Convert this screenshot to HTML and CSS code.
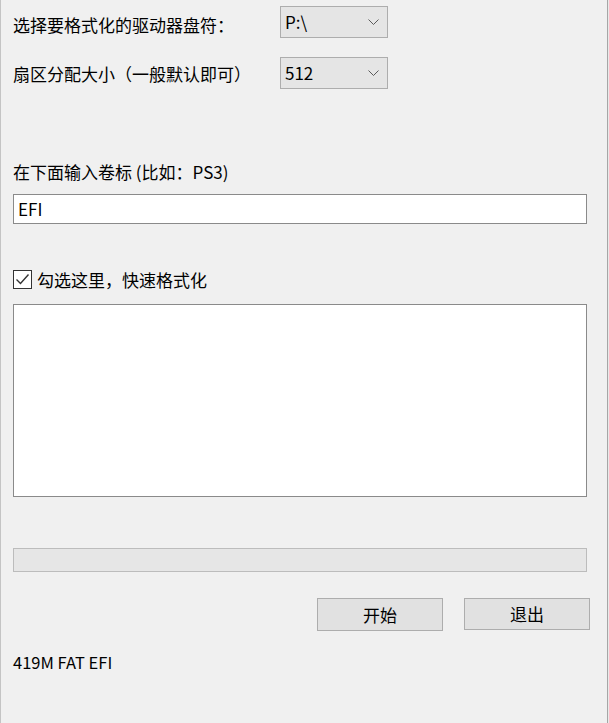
FILE: index.html
```html
<!DOCTYPE html>
<html lang="zh-CN">
<head>
<meta charset="utf-8">
<title>格式化</title>
<link rel="stylesheet" href="styles.css">
</head>
<body>
<div class="window">
  <div class="row row-first">
    <span class="label">选择要格式化的驱动器盘符：</span>
    <div class="combo">
      <span class="combo-text">P:\</span>
      <svg class="chev" width="11" height="6" viewBox="0 0 11 6"><polyline points="0.5,0.5 5.5,5.5 10.5,0.5" fill="none" stroke="#5a5a5a" stroke-width="1"/></svg>
    </div>
  </div>
  <div class="row row-second">
    <span class="label">扇区分配大小（一般默认即可）</span>
    <div class="combo">
      <span class="combo-text">512</span>
      <svg class="chev" width="11" height="6" viewBox="0 0 11 6"><polyline points="0.5,0.5 5.5,5.5 10.5,0.5" fill="none" stroke="#5a5a5a" stroke-width="1"/></svg>
    </div>
  </div>
  <div class="caption">在下面输入卷标 (比如：PS3)</div>
  <div class="textbox">EFI</div>
  <div class="check-row">
    <span class="checkbox">
      <svg width="17" height="17" viewBox="0 0 17 17"><polyline points="2.5,8.5 6.5,12.5 14.5,3.5" fill="none" stroke="#333" stroke-width="1.4"/></svg>
    </span>
    <span class="check-label">勾选这里，快速格式化</span>
  </div>
  <div class="log"></div>
  <div class="progress"></div>
  <div class="buttons">
    <div class="btn btn-start">开始</div>
    <div class="btn btn-exit">退出</div>
  </div>
  <div class="status">419M FAT EFI</div>
</div>
</body>
</html>
```
FILE: styles.css
```css
html, body {
  margin: 0;
  padding: 0;
  background: #e9e9e9;
}
body {
  font-family: "Noto Sans CJK SC", "Noto Sans", sans-serif;
  font-size: 17px;
  color: #000;
}
.window {
  box-sizing: border-box;
  width: 608px;
  height: 723px;
  background: #f0f0f0;
  border-left: 1px solid #c4c4c4;
  border-right: 1px solid #a6a6a6;
  padding: 0 0 0 12px;
  overflow: hidden;
}
.row {
  display: flex;
  align-items: center;
  height: 32px;
}
.row-first { padding-top: 6px; }
.row-second { margin-top: 19px; }
.label {
  width: 267px;
  line-height: 20px;
  position: relative;
  top: 3px;
  white-space: nowrap;
}
.row-second .label { top: 1px; }
.combo {
  box-sizing: border-box;
  width: 108px;
  height: 32px;
  background: #e5e5e5;
  border: 1px solid #adadad;
  display: flex;
  align-items: center;
  justify-content: space-between;
  padding: 0 8px 0 4px;
}
.combo-text {
  line-height: 20px;
}
.chev { display: block; }
.caption {
  margin-top: 73px;
  line-height: 20px;
}
.textbox {
  box-sizing: border-box;
  margin-top: 12px;
  width: 574px;
  height: 30px;
  background: #fff;
  border: 1px solid #8a8a8a;
  line-height: 28px;
  padding-left: 4px;
}
.check-row {
  margin-top: 46px;
  height: 19px;
  display: flex;
  align-items: center;
}
.checkbox {
  box-sizing: border-box;
  width: 19px;
  height: 19px;
  border: 1px solid #333;
  background: #fff;
  display: flex;
  align-items: center;
  justify-content: center;
}
.checkbox svg { display: block; }
.check-label {
  margin-left: 5px;
  line-height: 20px;
}
.log {
  box-sizing: border-box;
  margin-top: 15px;
  width: 574px;
  height: 193px;
  background: #fff;
  border: 1px solid #8a8a8a;
}
.progress {
  box-sizing: border-box;
  margin-top: 51px;
  width: 574px;
  height: 24px;
  background: #e6e6e6;
  border: 1px solid #bcbcbc;
}
.buttons {
  margin-top: 26px;
  width: 577px;
  display: flex;
  justify-content: flex-end;
  align-items: flex-start;
  gap: 21px;
}
.btn {
  box-sizing: border-box;
  width: 126px;
  background: #e1e1e1;
  border: 1px solid #adadad;
  display: flex;
  align-items: center;
  justify-content: center;
  line-height: 20px;
}
.btn-start { height: 33px; }
.btn-exit { height: 32px; }
.status {
  margin-top: 21px;
  line-height: 20px;
  font-size: 16.5px;
}
```
